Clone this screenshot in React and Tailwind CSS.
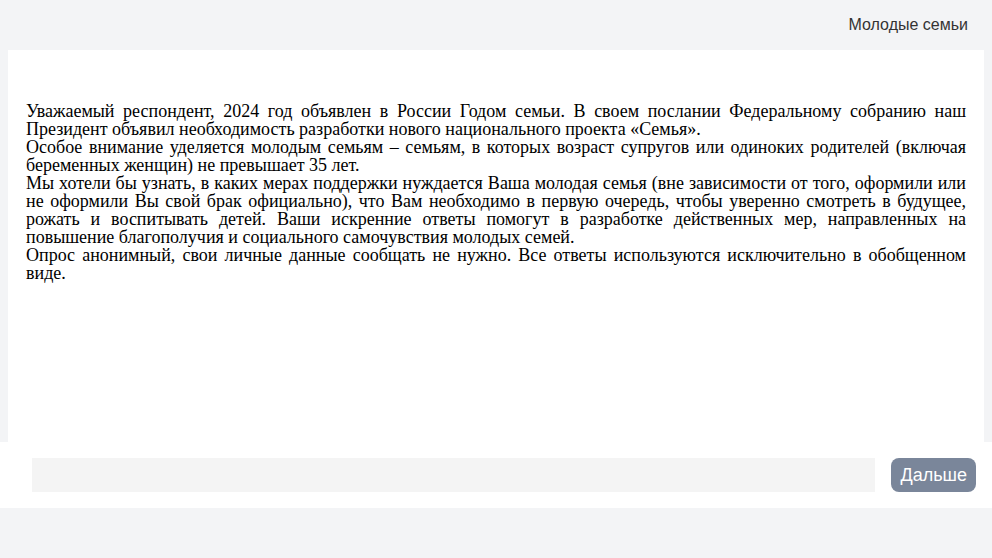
export default function App() {
  return (
    <div className="min-h-[558px] bg-[#f3f4f6] flex flex-col">
      <div className="h-[50px] flex items-center justify-end pr-6 font-['Liberation_Sans',Arial,sans-serif] text-[16px] text-[#333]">
        Молодые семьи
      </div>
      <div className="mx-2 h-[392px] bg-white px-[18px] pt-[52px] font-['Liberation_Serif','Times_New_Roman',serif] text-[18px] leading-[18px] text-black text-justify">
        <p>Уважаемый респондент, 2024 год объявлен в России Годом семьи. В своем послании Федеральному собранию наш Президент объявил необходимость разработки нового национального проекта «Семья».</p>
        <p>Особое внимание уделяется молодым семьям – семьям, в которых возраст супругов или одиноких родителей (включая беременных женщин) не превышает 35 лет.</p>
        <p>Мы хотели бы узнать, в каких мерах поддержки нуждается Ваша молодая семья (вне зависимости от того, оформили или не оформили Вы свой брак официально), что Вам необходимо в первую очередь, чтобы уверенно смотреть в будущее, рожать и воспитывать детей. Ваши искренние ответы помогут в разработке действенных мер, направленных на повышение благополучия и социального самочувствия молодых семей.</p>
        <p>Опрос анонимный, свои личные данные сообщать не нужно. Все ответы используются исключительно в обобщенном виде.</p>
      </div>
      <div className="h-[66px] bg-white flex items-center pl-8 pr-4 gap-4">
        <div className="flex-1 h-[34px] bg-[#f4f4f4]"></div>
        <button className="h-[34px] px-[9px] rounded-lg bg-[#7a869a] text-white text-[18px] font-['Liberation_Sans',Arial,sans-serif]">Дальше</button>
      </div>
    </div>
  );
}
